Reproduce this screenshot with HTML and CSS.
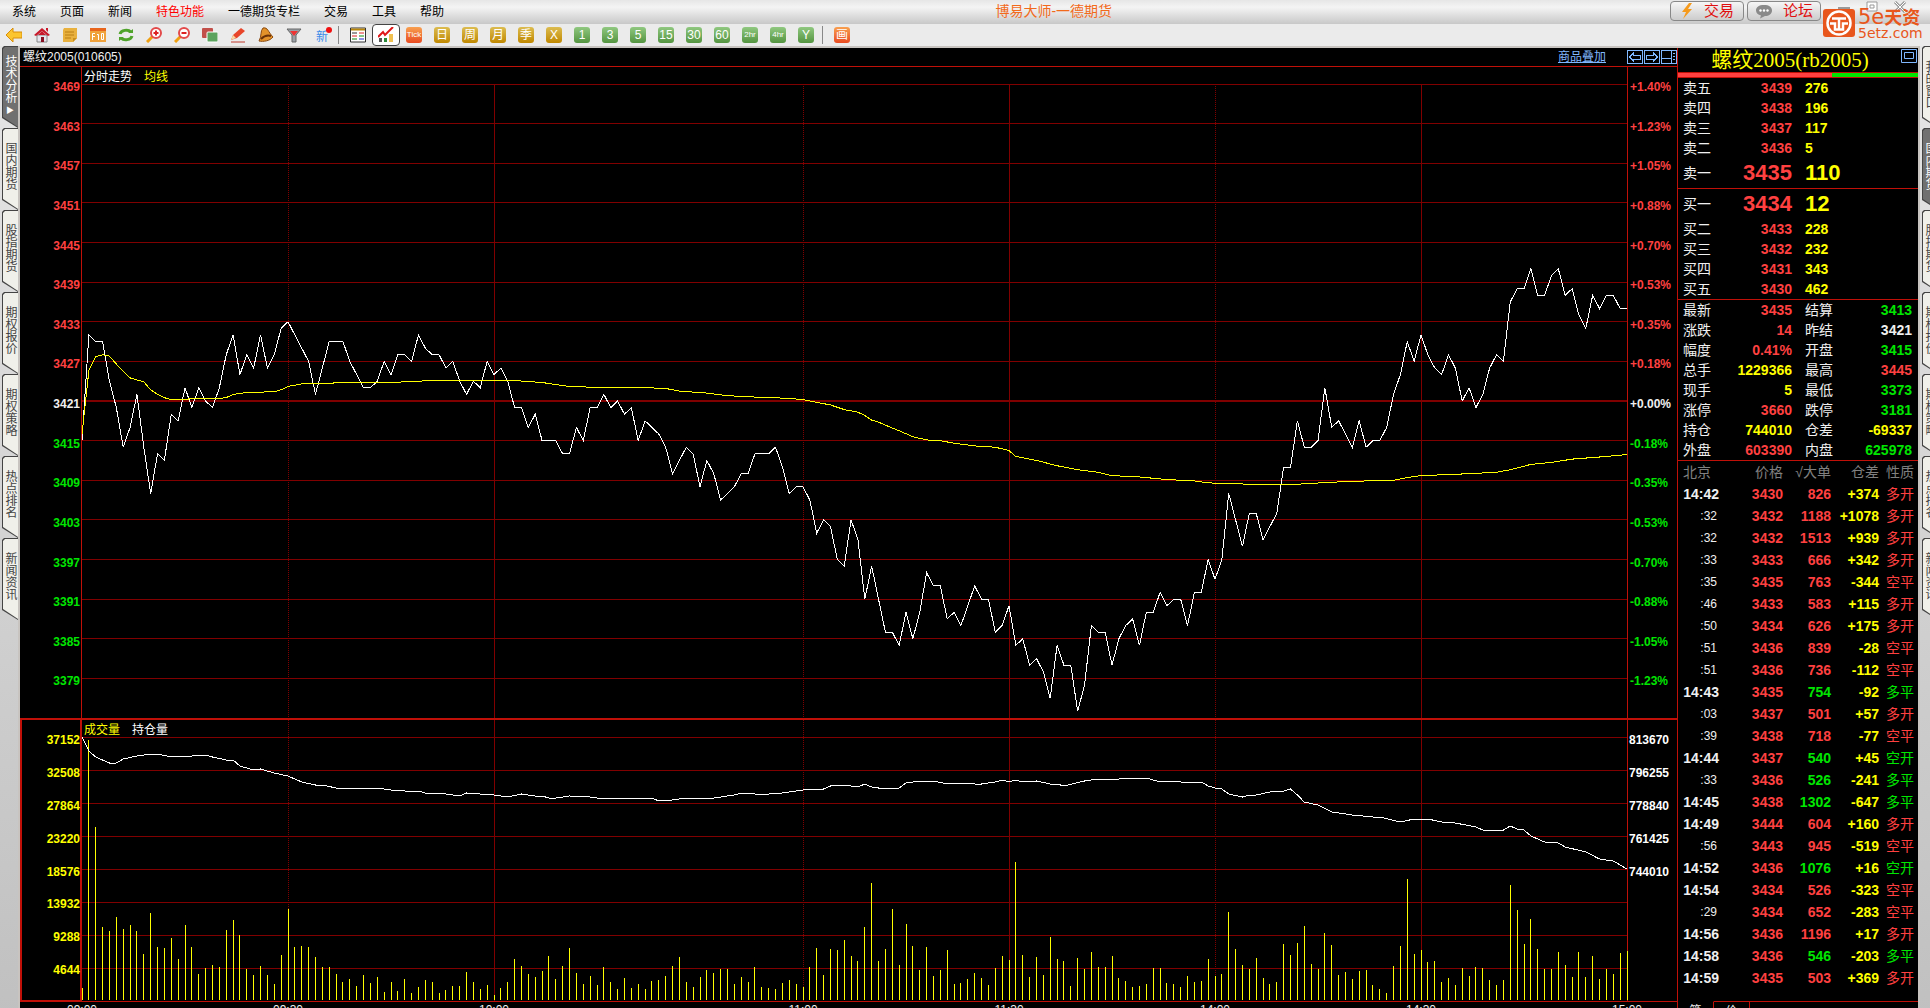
FILE: index.html
```html
<!DOCTYPE html>
<html lang="zh-CN">
<head>
    <meta charset="UTF-8">
    <meta name="viewport" content="width=device-width, initial-scale=1.0">
    <title>博易大师-一德期货</title>
    <link rel="stylesheet" href="styles.css">
</head>
<body>
    <div class="app">
        <header class="menubar">
            <nav class="menu">
                <a href="#">系统</a>
                <a href="#">页面</a>
                <a href="#">新闻</a>
                <a href="#" class="hot">特色功能</a>
                <a href="#">一德期货专栏</a>
                <a href="#">交易</a>
                <a href="#">工具</a>
                <a href="#">帮助</a>
            </nav>
            <h1 class="app-title">博易大师-一德期货</h1>
            <div class="window-actions">
                <button class="pill">
                    <svg width="14" height="16" viewBox="0 0 14 16"><path d="M9 0L2 9h4l-3 7 9-10H8l4-6z" fill="#f59a1c"/></svg>
                    交易
                </button>
                <button class="pill">
                    <svg width="18" height="15" viewBox="0 0 18 15"><path d="M9 1c5 0 8 2 8 5.500s-3 5.500-7 5.500l-5 2.500 1-3C3 11 1 9 1 6.500 1 3 4 1 9 1z" fill="#8a8a8a"/><circle cx="5.500" cy="6.500" r="1.200" fill="#fff"/><circle cx="9" cy="6.500" r="1.200" fill="#fff"/><circle cx="12.500" cy="6.500" r="1.200" fill="#fff"/></svg>
                    论坛
                </button>
                <div class="window-buttons">
                    <button aria-label="最小化"><svg width="16" height="12" viewBox="0 0 16 12"><path d="M2 7h12" stroke="#999" stroke-width="2"/></svg></button>
                    <button aria-label="还原"><svg width="16" height="12" viewBox="0 0 16 12"><path d="M3 1h10v9H3zM6 4h4v3H6z" fill="#fff" stroke="#999"/></svg></button>
                    <button aria-label="关闭"><svg width="16" height="12" viewBox="0 0 16 12"><path d="M3 1l10 10M13 1L3 11" stroke="#999" stroke-width="3"/><path d="M3 1l10 10M13 1L3 11" stroke="#fff"/></svg></button>
                </div>
            </div>
            <div class="brand">
                <svg width="32" height="28" viewBox="0 0 32 28"><rect width="32" height="28" rx="3" fill="#e8561c"/><circle cx="16" cy="14" r="11.500" fill="none" stroke="#fff" stroke-width="2.500"/><path d="M9 9.500h14M7 14.500h5v6h8v-6h5M16 10v10" fill="none" stroke="#fff" stroke-width="2.500"/></svg>
                <div class="brand-text">
                    <strong>5e<b>天资</b></strong>
                    <span>5etz.com</span>
                </div>
            </div>
        </header>

        <div class="toolbar">
            <button aria-label="后退"><svg viewBox="0 0 16 16"><path d="M0 8l7-7v4h9v6H7v4z" fill="#fbc530" stroke="#d98e08"/></svg></button>
            <button aria-label="主页"><svg viewBox="0 0 16 16"><path d="M3 8h10v7H3z" fill="#e6e6ee" stroke="#888"/><path d="M0 8l8-7 8 7-2 1-6-5-6 5zM12 1h2v4l-2-2z" fill="#c8182a"/><path d="M4 8l4-4 4 4z" fill="#c8182a"/><path d="M7 10h3v5H7z" fill="#812"/></svg></button>
            <button aria-label="记事"><svg viewBox="0 0 16 16"><path d="M2 1h13v10l-4 4H1V3z" fill="#e9b13e"/><path d="M3 5h9M3 8h9M3 11h6" stroke="#b97f14"/><path d="M11 15v-4h4z" fill="#c98f1c"/></svg></button>
            <button aria-label="F10"><svg viewBox="0 0 16 16"><path d="M0 2h16v13H0z" fill="#f0a23c"/><path d="M0 1h16v3H0z" fill="#e8651c"/><path d="M2.500 13V6.500H5M2.500 9.500H5M7 7.500h1.500V13M11.500 6.500h2v6h-2z" fill="none" stroke="#fff"/></svg></button>
            <button aria-label="刷新"><svg viewBox="0 0 16 16"><path d="M2 7c1-4 8-5 11-2M14 9c-1 4-8 5-11 2" fill="none" stroke="#4fa32a" stroke-width="3"/><path d="M10 6h5V2zM6 10H1v4z" fill="#4fa32a"/></svg></button>
            <button aria-label="放大"><svg viewBox="0 0 16 16"><path d="M1 15l6-6" stroke="#f0a010" stroke-width="3"/><circle cx="10" cy="6" r="5" fill="#fff" stroke="#e34a4a" stroke-width="2"/><path d="M7.500 6h5M10 3.500v5" stroke="#d22" stroke-width="2"/></svg></button>
            <button aria-label="缩小"><svg viewBox="0 0 16 16"><path d="M1 15l6-6" stroke="#f0a010" stroke-width="3"/><circle cx="10" cy="6" r="5" fill="#fff" stroke="#e34a4a" stroke-width="2"/><path d="M7.500 6h5" stroke="#d22" stroke-width="2"/></svg></button>
            <button aria-label="叠加"><svg viewBox="0 0 16 16"><rect width="11" height="10" y="1" rx="1" fill="#c2504a"/><rect x="5" y="5" width="11" height="10" rx="1" fill="#5ca35e" stroke="#fff"/></svg></button>
            <button aria-label="画线"><svg viewBox="0 0 16 16"><path d="M1 15h14" stroke="#c0392b"/><path d="M1 13l2-5 8-7 4 3-8 7z" fill="#e8452a"/><path d="M1 13l2-5 3 3z" fill="#f7d9a0"/></svg></button>
            <button aria-label="预警"><svg viewBox="0 0 16 16"><path d="M5 1c5-1 5 4 10 9-3 4-10 5-14 4C4 9 2 4 5 1z" fill="#e3922a" stroke="#8a4a10"/><path d="M3 12c3-3 7-4 10-3" fill="none" stroke="#6b3208" stroke-width="2"/></svg></button>
            <button aria-label="筛选"><svg viewBox="0 0 16 16"><path d="M1 2h14l-5 6v7H6V8z" fill="#9aa0a6" stroke="#666"/><path d="M4 4h8L8 9z" fill="#e33"/></svg></button>
            <button aria-label="新消息" class="tool-new">新</button>
            <i class="divider"></i>
            <button aria-label="报价表"><svg viewBox="0 0 16 16"><path d="M.5 1h15v14H.5z" fill="#fff" stroke="#333"/><path d="M1 2.500h14" stroke="#b8860b" stroke-width="2"/><path d="M2 6h5" stroke="#333"/><path d="M9 6h5M2 9h5" stroke="#d22"/><path d="M9 9h5M2 12h5" stroke="#181"/><path d="M9 12h5" stroke="#22c"/></svg></button>
            <button aria-label="分时图" class="active"><svg viewBox="0 0 16 16"><path d="M1 15v-4h3v4z" fill="#555"/><path d="M6 15v-4h3v4z" fill="#2a8a3a"/><path d="M11 15V7h4v8z" fill="#f0c050"/><path d="M0 10l5-5 2 3 8-8" fill="none" stroke="#e01818" stroke-width="2"/></svg></button>
            <button><span class="chip orange">Tick</span></button>
            <button><span class="chip gold">日</span></button>
            <button><span class="chip gold">周</span></button>
            <button><span class="chip gold">月</span></button>
            <button><span class="chip gold">季</span></button>
            <button><span class="chip gold">X</span></button>
            <button><span class="chip green">1</span></button>
            <button><span class="chip green">3</span></button>
            <button><span class="chip green">5</span></button>
            <button><span class="chip green">15</span></button>
            <button><span class="chip green">30</span></button>
            <button><span class="chip green">60</span></button>
            <button><span class="chip green small">2hr</span></button>
            <button><span class="chip green small">4hr</span></button>
            <button><span class="chip green">Y</span></button>
            <i class="divider"></i>
            <button><span class="chip orange draw">画</span></button>
        </div>

        <main class="workspace">
            <nav class="side-tabs">
                <button class="active"><span>技术分析</span><small>▶</small></button>
                <button><span>国内期货</span></button>
                <button><span>股指期货</span></button>
                <button><span>期权报价</span></button>
                <button><span>期权策略</span></button>
                <button><span>热点排名</span></button>
                <button><span>新闻资讯</span></button>
            </nav>

            <section class="chart">
                <div class="chart-head">
                    <span>螺纹2005(010605)</span>
                    <div class="chart-tools">
                        <a href="#">商品叠加</a>
                        <button aria-label="上一个"><svg width="16" height="14" viewBox="0 0 16 14"><path d="M.5.5h15v13H.5zM2.500 7l4-4v2h7v4h-7v2z"/></svg></button>
                        <button aria-label="下一个"><svg width="16" height="14" viewBox="0 0 16 14"><path d="M.5.5h15v13H.5zM13.500 7l-4-4v2h-7v4h7v2z"/></svg></button>
                        <button aria-label="布局"><svg width="16" height="14" viewBox="0 0 16 14"><path d="M.5.5h15v13H.5zM.5 8.500h10M10.500.5v13M12 3.500h2M12 6.500h2M12 9.500h2"/></svg></button>
                    </div>
                </div>

                <div class="axis price-axis" id="price-axis"></div>
                <div class="legend"><span>分时走势</span><span class="yellow">均线</span></div>
                <svg class="plot-price" id="price-plot" viewBox="0 0 225 96" preserveAspectRatio="none"></svg>
                <div class="axis percent-axis" id="percent-axis"></div>

                <svg class="time-grid" id="time-grid" viewBox="0 0 225 100" preserveAspectRatio="none"></svg>

                <div class="axis volume-axis" id="volume-axis"></div>
                <div class="legend volume-legend"><span class="yellow">成交量</span><span>持仓量</span></div>
                <svg class="plot-volume" id="volume-plot" viewBox="0 0 225 264" preserveAspectRatio="none"></svg>
                <div class="axis interest-axis" id="interest-axis"></div>

                <div class="time-axis" id="time-axis"></div>
            </section>

            <aside class="quote">
                <div class="quote-title">
                    <h2>螺纹2005(rb2005)</h2>
                    <button aria-label="最大化"><svg width="16" height="14" viewBox="0 0 16 14"><path d="M.5.5h15v13H.5zM3.500 3.500h9v6h-9z"/></svg></button>
                </div>
                <div class="ratio"><i></i></div>

                <table class="depth">
                    <tr><th>卖五</th><td class="up">3439</td><td>276</td></tr>
                    <tr><th>卖四</th><td class="up">3438</td><td>196</td></tr>
                    <tr><th>卖三</th><td class="up">3437</td><td>117</td></tr>
                    <tr><th>卖二</th><td class="up">3436</td><td>5</td></tr>
                    <tr class="best"><th>卖一</th><td class="up">3435</td><td>110</td></tr>
                </table>
                <table class="depth">
                    <tr class="best"><th>买一</th><td class="up">3434</td><td>12</td></tr>
                    <tr><th>买二</th><td class="up">3433</td><td>228</td></tr>
                    <tr><th>买三</th><td class="up">3432</td><td>232</td></tr>
                    <tr><th>买四</th><td class="up">3431</td><td>343</td></tr>
                    <tr><th>买五</th><td class="up">3430</td><td>462</td></tr>
                </table>
                <table class="stats">
                    <tr><th>最新</th><td class="up">3435</td><th>结算</th><td class="down">3413</td></tr>
                    <tr><th>涨跌</th><td class="up">14</td><th>昨结</th><td class="flat">3421</td></tr>
                    <tr><th>幅度</th><td class="up">0.41%</td><th>开盘</th><td class="down">3415</td></tr>
                    <tr><th>总手</th><td>1229366</td><th>最高</th><td class="up">3445</td></tr>
                    <tr><th>现手</th><td>5</td><th>最低</th><td class="down">3373</td></tr>
                    <tr><th>涨停</th><td class="up">3660</td><th>跌停</th><td class="down">3181</td></tr>
                    <tr><th>持仓</th><td>744010</td><th>仓差</th><td>-69337</td></tr>
                    <tr><th>外盘</th><td class="up">603390</td><th>内盘</th><td class="down">625978</td></tr>
                </table>
                <table class="ticks">
                    <thead>
                        <tr><th>北京</th><th>价格</th><th>√大单</th><th>仓差</th><th>性质</th></tr>
                    </thead>
                    <tbody id="ticks"></tbody>
                </table>
                <div class="quote-tabs">
                    <button class="active">笔</button>
                    <button>价</button>
                </div>
            </aside>

            <nav class="side-tabs right">
                <button><span>我的窗口</span></button>
                <button class="active"><span>国内期货</span></button>
                <button><span>股指期货</span></button>
                <button><span>期权报价</span></button>
                <button><span>期权策略</span></button>
                <button><span>热点排名</span></button>
                <button><span>新闻资讯</span></button>
            </nav>
        </main>
    </div>

    <script src="script.js"></script>
</body>
</html>
```

FILE: styles.css
```css
* {
    box-sizing: border-box;
}

body {
    margin: 0;
    height: 100vh;
    overflow: hidden;
    background: #000;
    color: #f0f0f0;
    font-family: "Liberation Sans", "Noto Sans CJK SC", sans-serif;
    font-size: 12px;
}

button {
    margin: 0;
    padding: 0;
    border: 0;
    background: none;
    color: inherit;
    font: inherit;
    cursor: pointer;
}

h1,
h2 {
    margin: 0;
    font-weight: normal;
}

.app {
    display: flex;
    flex-direction: column;
    /* the time axis runs past the bottom edge of the window */
    height: calc(100vh + 12px);
}

/* menu bar */
.menubar {
    position: relative;
    display: flex;
    align-items: flex-start;
    justify-content: space-between;
    flex: 0 0 24px;
    padding-left: 12px;
    background: linear-gradient(#e6e6e6, #f4f4f4 30%, #c8c8c8);
}

.menu {
    display: flex;
    flex: 17 1 0;
    gap: 24px;
    line-height: 24px;
}

.menu a {
    color: #000;
    text-decoration: none;
}

.menu a.hot {
    color: #f00;
}

.app-title {
    color: #f26a1b;
    font-size: 14px;
    line-height: 22px;
}

.window-actions {
    display: flex;
    flex: 14 1 0;
    justify-content: flex-end;
    gap: 3px;
    padding-top: 1px;
    padding-right: 8px;
}

.pill {
    display: flex;
    align-items: center;
    justify-content: center;
    gap: 10px;
    width: 74px;
    height: 20px;
    border: 1px solid #888;
    border-radius: 4px;
    background: linear-gradient(#f6f6f6, #ccc);
    color: #e01010;
    font-size: 15px;
    line-height: 16px;
}

.window-buttons {
    display: flex;
    align-items: flex-start;
    gap: 12px;
    padding-left: 12px;
    width: 98px;
}

.brand {
    position: absolute;
    top: 9px;
    right: 5px;
    display: flex;
    gap: 3px;
    color: #e8561c;
    z-index: 2;
}

.brand-text {
    display: flex;
    flex-direction: column;
    width: 67px;
}

.brand-text strong {
    font-family: "DejaVu Sans", "Noto Sans CJK SC", sans-serif;
    font-size: 21px;
    font-weight: normal;
    line-height: 16px;
    white-space: nowrap;
}

.brand-text b {
    font-size: 18px;
}

.brand-text span {
    font-family: "DejaVu Sans", sans-serif;
    font-size: 14px;
    line-height: 14px;
}

/* toolbar */
.toolbar {
    display: flex;
    align-items: center;
    flex: 0 0 24px;
    border-bottom: 2px solid #c8c4c0;
    background: #ebebeb;
}

.toolbar button {
    display: flex;
    align-items: center;
    justify-content: center;
    width: 28px;
    height: 22px;
}

.toolbar button.active {
    border: 1px solid #444;
    border-radius: 4px;
    background: #fff;
}

.toolbar svg {
    width: 16px;
    height: 16px;
}

.toolbar .tool-new {
    position: relative;
    color: #3a8ae8;
}

.tool-new::after {
    content: "";
    position: absolute;
    top: 3px;
    right: 4px;
    width: 6px;
    height: 6px;
    border-radius: 50%;
    background: #f01010;
}

.divider {
    width: 8px;
    height: 18px;
    background: linear-gradient(#888, #888) 2px 0 / 1px 100% no-repeat;
}

.chip {
    width: 16px;
    height: 16px;
    border-radius: 3px;
    color: #fff;
    font-size: 12px;
    line-height: 16px;
    text-align: center;
}

.chip.small,
.chip.orange {
    font-size: 8px;
}

.chip.orange.draw {
    font-size: 12px;
}

.chip.gold {
    background: linear-gradient(#dcbc50, #c08800);
}

.chip.green {
    background: linear-gradient(#90c880, #549440);
}

.chip.orange {
    background: linear-gradient(#f8a050, #e84a20);
}

/* workspace */
.workspace {
    display: grid;
    grid-template-columns: 20px 1fr 241px 12px;
    flex: 1;
    min-height: 0;
}

.side-tabs {
    display: flex;
    flex-direction: column;
    padding-left: 2px;
    margin-top: -2px;
    border-right: 2px solid #c8c4c0;
    background: linear-gradient(#e6e6e6, #c0c0c0);
    overflow: hidden;
}

.side-tabs button {
    position: relative;
    display: flex;
    flex-direction: column;
    align-items: center;
    flex: 0 0 82px;
    width: 16px;
    padding-top: 14px;
    background: #444;
    clip-path: polygon(0 2px, 2px 0, 100% 0, 100% 100%, 0 72px);
    color: #444;
    line-height: 16px;
}

.side-tabs button::before {
    content: "";
    position: absolute;
    inset: 1px 0 1px 1px;
    background: #f0f0ea;
    clip-path: polygon(0 2px, 2px 0, 100% 0, 100% 100%, 0 70px);
}

.side-tabs span {
    position: relative;
    writing-mode: vertical-rl;
}

.side-tabs .active {
    padding-top: 9px;
    color: #fff;
}

.side-tabs .active::before {
    background: #707070;
}

.side-tabs small {
    position: relative;
    font-size: 8px;
    line-height: 16px;
}

.side-tabs.right {
    border-left: 2px solid #c8c4c0;
    border-right: 0;
}

.side-tabs.right .active {
    padding-top: 14px;
}

/* chart */
.chart {
    display: grid;
    grid-template-columns: 62px 1fr 50px;
    grid-template-rows: 19px 17px 634fr 19px 264fr 19px;
    min-width: 0;
    min-height: 0;
    background: #000;
}

.chart-head {
    grid-column: 1 / 4;
    display: flex;
    justify-content: space-between;
    padding-left: 3px;
    border-bottom: 1px solid #c01008;
    line-height: 18px;
}

.chart-tools {
    display: flex;
    align-items: center;
    gap: 1px;
}

.chart-tools a {
    margin-right: 20px;
    color: #80b8ff;
}

.chart-tools button,
.quote-title button {
    height: 14px;
    line-height: 0;
}

.chart-tools svg,
.quote-title svg {
    fill: none;
    stroke: #80b8ff;
}

.axis {
    display: grid;
    grid-auto-rows: 1fr;
    font-weight: bold;
    line-height: 6px;
}

.price-axis {
    grid-area: 2 / 1 / 4 / 2;
    padding-top: 17px;
    padding-right: 1px;
    border-right: 1px solid #c01008;
    text-align: right;
}

.percent-axis {
    grid-area: 2 / 3 / 4 / 4;
    padding-top: 17px;
    padding-left: 2px;
    border-left: 1px solid #c01008;
}

.volume-axis {
    grid-area: 4 / 1 / 6 / 2;
    padding-top: 17px;
    border: 2px solid #c01008;
    margin-bottom: -1px;
    color: #ff0;
    text-align: right;
}

.interest-axis {
    grid-area: 4 / 3 / 6 / 4;
    padding-top: 17px;
    padding-left: 1px;
    border-top: 2px solid #c01008;
    border-left: 1px solid #c01008;
    color: #fff;
}

.legend {
    grid-area: 2 / 2;
    display: flex;
    gap: 12px;
    padding-left: 2px;
    color: #fff;
    line-height: 20px;
}

.volume-legend {
    grid-area: 4 / 2;
    border-top: 2px solid #c01008;
}

.plot-price {
    grid-area: 3 / 2;
    z-index: 1;
}

.plot-volume {
    grid-area: 5 / 2;
    z-index: 1;
}

.time-grid {
    grid-area: 3 / 2 / 6 / 3;
}

.chart > svg {
    width: 100%;
    height: 100%;
    min-height: 0;
    overflow: visible;
}

.chart path {
    fill: none;
    stroke-width: 1px;
    vector-effect: non-scaling-stroke;
    shape-rendering: crispEdges;
}

.chart .grid {
    stroke: #800000;
}

.chart .dotted {
    stroke-dasharray: 1 1;
}

.chart .base {
    stroke-width: 2px;
}

.chart .white-line {
    stroke: #fff;
}

.chart .yellow-line {
    stroke: #ff0;
}

.time-axis {
    grid-column: 1 / 4;
    display: flex;
    justify-content: space-between;
    padding: 0 35px 0 47px;
    border-top: 1px solid #c01008;
    line-height: 16px;
}

.time-axis span {
    width: 30px;
    text-align: center;
}

.time-axis .wide {
    margin-left: 103px;
}

.up {
    color: #ff4040;
}

.down {
    color: #00e600;
}

.flat {
    color: #f0f0f0;
}

.yellow {
    color: #ff0;
}

/* quote panel */
.quote {
    display: flex;
    flex-direction: column;
    border-left: 1px solid #c01008;
    background: #000;
    font-size: 14px;
}

.quote-title {
    display: flex;
    align-items: flex-start;
    padding: 1px 1px 0;
    height: 24px;
}

.quote-title h2 {
    flex: 1;
    color: #ff0;
    font-family: "Liberation Serif", "Noto Sans CJK SC", serif;
    font-size: 21px;
    line-height: 22px;
    text-align: center;
}

.ratio {
    height: 6px;
    border-top: 1px solid #c01008;
    border-bottom: 1px solid #c01008;
    background: #00e600;
}

.ratio i {
    display: block;
    width: 64%;
    height: 4px;
    background: #ff4040;
}

.quote table {
    width: 100%;
    border-collapse: separate;
    border-spacing: 0;
    table-layout: fixed;
    border-bottom: 1px solid #c01008;
}

.quote th,
.quote td {
    padding: 0;
    height: 20px;
    line-height: 20px;
    white-space: nowrap;
}

.quote th {
    padding-left: 5px;
    font-weight: normal;
    text-align: left;
}

.quote td {
    font-weight: bold;
    text-align: right;
}

.depth th,
.stats th:first-child {
    width: 50px;
}

.depth td:nth-child(2),
.stats td:nth-child(2) {
    width: 64px;
}

.depth td:last-child {
    padding-left: 13px;
    text-align: left;
}

.quote .best td {
    height: 30px;
    font-size: 22px;
    line-height: 30px;
}

.quote .stats th:nth-child(3) {
    width: 60px;
    padding-left: 13px;
}

.stats td:last-child {
    padding-right: 6px;
}

.depth td:last-child,
.stats td:not([class]) {
    color: #ff0;
}

.quote .ticks {
    border-bottom: 0;
}

.ticks th:nth-child(1) {
    width: 41px;
}

.ticks th:nth-child(2) {
    width: 64px;
}

.ticks th:nth-child(3),
.ticks th:nth-child(4) {
    width: 48px;
}

.quote .ticks th,
.quote .ticks td {
    height: 22px;
    line-height: 22px;
}

.quote .ticks th {
    color: #808080;
}

.quote .ticks th:not(:first-child) {
    padding-left: 0;
    text-align: right;
}

.ticks tr > :last-child {
    padding-right: 4px;
}

.quote .ticks .second {
    padding-right: 2px;
    font-size: 12px;
    font-weight: normal;
}

.quote .ticks .type {
    padding-right: 4px;
    font-weight: normal;
}

.quote-tabs {
    display: flex;
    flex: 0 0 19px;
    margin-top: auto;
    font-size: 12px;
    line-height: 12px;
}

.quote-tabs button {
    width: 36px;
    height: 19px;
    border-top: 1px solid #c01008;
    border-right: 1px solid #c01008;
}

.quote-tabs .active {
    border-top-color: transparent;
}

.quote-tabs::after {
    content: "";
    flex: 1;
    border-top: 1px solid #c01008;
}
```

FILE: script.js
```js
// last price of every minute, 09:00 - 15:00 (225 trading minutes)
const prices = [
    3415, 3431, 3430, 3430, 3424, 3420, 3414, 3417, 3422, 3414, 3407, 3413, 3412, 3419, 3418,
    3423, 3420, 3423, 3421, 3420, 3423, 3428, 3431, 3425, 3428, 3426, 3431, 3426, 3428, 3432,
    3433, 3431, 3429, 3427, 3422, 3426, 3430, 3430, 3430, 3427, 3425, 3423, 3423, 3424, 3427,
    3425, 3428, 3428, 3427, 3431, 3429, 3428, 3428, 3426, 3427, 3424, 3422, 3424, 3423, 3427,
    3425, 3426, 3424, 3420, 3420, 3417, 3419, 3415, 3415, 3415, 3413, 3413, 3417, 3415, 3420,
    3420, 3422, 3420, 3421, 3419, 3420, 3415, 3418, 3417, 3416, 3414, 3410, 3412, 3414, 3413,
    3408, 3412, 3410, 3406, 3407, 3408, 3410, 3410, 3413, 3413, 3413, 3414, 3411, 3407, 3408,
    3408, 3406, 3401, 3403, 3402, 3397, 3396, 3403, 3400, 3391, 3396, 3391, 3386, 3386, 3384,
    3389, 3385, 3389, 3395, 3393, 3393, 3388, 3389, 3387, 3390, 3393, 3391, 3391, 3386, 3387,
    3390, 3384, 3385, 3381, 3382, 3380, 3376, 3384, 3381, 3381, 3374, 3378, 3387, 3386, 3386,
    3381, 3385, 3387, 3388, 3384, 3389, 3389, 3392, 3390, 3391, 3391, 3387, 3392, 3392, 3397,
    3394, 3397, 3407, 3403, 3399, 3404, 3404, 3400, 3402, 3404, 3411, 3411, 3418, 3414, 3414,
    3415, 3423, 3417, 3418, 3416, 3414, 3418, 3414, 3415, 3415, 3417, 3422, 3425, 3430, 3427,
    3431, 3428, 3426, 3425, 3428, 3426, 3421, 3423, 3420, 3422, 3426, 3428, 3427, 3436, 3438,
    3438, 3441, 3437, 3437, 3440, 3441, 3437, 3438, 3434, 3432, 3437, 3435, 3437, 3437, 3435,
    3435
];

// average price, [minute, price]
const average = [
    [0, 3416], [1, 3425.6], [2, 3427.7], [3, 3428], [4, 3427.8], [5, 3426.6], [6, 3425.5], [7, 3424.5],
    [9, 3423.9], [10, 3422.7], [11, 3422], [12, 3421.5], [13, 3421.2], [15, 3421.2], [16, 3421.4],
    [20, 3421.4], [21, 3421.5], [22, 3422], [24, 3422.3], [28, 3422.4], [29, 3422.7], [30, 3423.2],
    [32, 3423.6], [36, 3423.6], [37, 3423.8], [45, 3423.8], [51, 3424.1], [63, 3424.1], [67, 3423.8],
    [71, 3423.2], [74, 3423.1], [80, 3423.1], [85, 3422.9], [87, 3422.5], [91, 3422.2], [94, 3421.8],
    [98, 3421.6], [103, 3421.4], [105, 3421.2], [107, 3420.8], [109, 3420.4], [111, 3419.7],
    [113, 3419.3], [114, 3418.8], [115, 3418.1], [116, 3417.8], [118, 3416.9], [119, 3416.5],
    [121, 3415.6], [123, 3415.1], [125, 3415], [127, 3414.6], [130, 3414.2], [133, 3414], [135, 3413.5],
    [136, 3412.6], [139, 3412], [142, 3411.2], [145, 3410.6], [148, 3410.2], [150, 3409.7], [154, 3409.5],
    [158, 3409.1], [162, 3408.9], [164, 3408.6], [167, 3408.5], [170, 3408.4], [177, 3408.4],
    [182, 3408.7], [187, 3408.9], [191, 3409], [193, 3409.4], [195, 3409.7], [200, 3409.9],
    [206, 3410.2], [208, 3410.6], [211, 3411.4], [214, 3411.7], [217, 3412.2], [222, 3412.6], [225, 3412.9]
];

// volume per minute, one unit is about 141 lots (264 units = 37152)
const volumes = [
    12, 260, 173, 73, 69, 83, 71, 75, 69, 46, 87, 53, 52, 62, 41, 75, 53, 26, 32, 35, 33, 70, 80, 65, 31,
    25, 34, 25, 16, 45, 91, 53, 54, 53, 43, 33, 33, 26, 18, 21, 14, 25, 17, 23, 8, 18, 9, 21, 7, 13,
    20, 18, 7, 10, 14, 14, 28, 18, 11, 15, 5, 12, 18, 41, 34, 26, 23, 29, 44, 21, 34, 52, 27, 16, 24,
    15, 33, 18, 11, 22, 12, 16, 11, 19, 20, 24, 34, 43, 18, 13, 23, 30, 27, 31, 31, 16, 23, 18, 33, 13,
    12, 11, 17, 20, 16, 13, 33, 52, 25, 51, 50, 60, 44, 39, 73, 117, 39, 51, 91, 35, 76, 54, 30, 53, 24,
    30, 50, 16, 17, 21, 27, 22, 15, 32, 44, 40, 138, 45, 23, 43, 25, 63, 41, 39, 14, 42, 31, 48, 33, 33,
    44, 22, 19, 13, 14, 16, 32, 32, 17, 16, 13, 24, 18, 19, 41, 24, 26, 88, 51, 35, 31, 42, 22, 16, 18,
    56, 45, 57, 74, 36, 31, 67, 55, 25, 28, 21, 29, 30, 15, 11, 7, 34, 54, 121, 46, 50, 38, 39, 18, 22,
    15, 32, 24, 33, 32, 20, 15, 20, 115, 90, 56, 81, 51, 31, 31, 48, 35, 23, 48, 23, 44, 21, 31, 26, 47,
    49
];

// open interest, [minute, distance below 813670 in the same units]
const interest = [
    [0, 0], [1, 14], [2, 20], [3, 23], [4, 26], [5, 26], [6, 22], [8, 19], [10, 17], [11, 17], [13, 20],
    [14, 19], [16, 19], [17, 18], [18, 18], [19, 20], [21, 23], [22, 23], [23, 29], [25, 33], [26, 32],
    [28, 36], [30, 39], [32, 45], [34, 48], [35, 48], [37, 51], [41, 51], [42, 52], [43, 51], [45, 53],
    [47, 54], [49, 54], [50, 56], [52, 56], [55, 59], [56, 56], [58, 57], [60, 58], [62, 60], [64, 57],
    [66, 59], [67, 59], [68, 61], [69, 61], [71, 59], [72, 60], [73, 59], [75, 61], [76, 62], [77, 61],
    [79, 62], [80, 61], [83, 61], [84, 64], [86, 63], [88, 61], [90, 62], [92, 61], [95, 58], [96, 56],
    [98, 57], [100, 57], [102, 56], [104, 54], [106, 52], [107, 53], [108, 52], [109, 49], [110, 48],
    [111, 48], [113, 50], [114, 47], [115, 50], [116, 51], [119, 51], [120, 46], [122, 44], [124, 44],
    [126, 47], [127, 46], [128, 47], [129, 46], [130, 47], [131, 47], [133, 45], [134, 43], [135, 45],
    [136, 43], [137, 45], [139, 44], [141, 47], [142, 47], [143, 49], [146, 44], [147, 43], [149, 42],
    [150, 43], [152, 41], [153, 41], [154, 42], [155, 41], [157, 45], [159, 44], [161, 46], [162, 45],
    [163, 45], [164, 49], [165, 51], [166, 52], [167, 57], [169, 60], [170, 58], [171, 58], [173, 55],
    [175, 54], [176, 52], [177, 58], [178, 65], [180, 68], [182, 75], [185, 78], [188, 80], [189, 80],
    [192, 85], [194, 82], [196, 82], [198, 85], [200, 86], [203, 90], [204, 93], [207, 93], [208, 89],
    [209, 92], [210, 93], [211, 99], [213, 105], [215, 106], [216, 110], [219, 115], [221, 122],
    [223, 124], [225, 132]
];

// time, price, size, open interest change, type
const ticks = [
    ['14:42', 3430, 826, '+374', '多开'], [':32', 3432, 1188, '+1078', '多开'],
    [':32', 3432, 1513, '+939', '多开'], [':33', 3433, 666, '+342', '多开'],
    [':35', 3435, 763, '-344', '空平'], [':46', 3433, 583, '+115', '多开'],
    [':50', 3434, 626, '+175', '多开'], [':51', 3436, 839, '-28', '空平'],
    [':51', 3436, 736, '-112', '空平'], ['14:43', 3435, 754, '-92', '多平'],
    [':03', 3437, 501, '+57', '多开'], [':39', 3438, 718, '-77', '空平'],
    ['14:44', 3437, 540, '+45', '空开'], [':33', 3436, 526, '-241', '多平'],
    ['14:45', 3438, 1302, '-647', '多平'], ['14:49', 3444, 604, '+160', '多开'],
    [':56', 3443, 945, '-519', '空平'], ['14:52', 3436, 1076, '+16', '空开'],
    ['14:54', 3434, 526, '-323', '空平'], [':29', 3434, 652, '-283', '空平'],
    ['14:56', 3436, 1196, '+17', '多开'], ['14:58', 3436, 546, '-203', '多平'],
    ['14:59', 3435, 503, '+369', '多开']
];

const TOP = 3469;
const BASE = 3421;

function el(id) {
    return document.getElementById(id);
}

function path(d, cls) {
    return `<path class="${cls}" d="${d}"/>`;
}

function line(points) {
    return 'M' + points.map(p => p.join(' ')).join('L');
}

function drawPrice() {
    let svg = '';
    for (let p = TOP; p >= 3379; p -= 6) {
        svg += path(`M0 ${TOP - p}H225`, p === BASE ? 'grid base' : 'grid');
    }
    svg += path(line(prices.map((p, i) => [i, TOP - p])), 'white-line');
    svg += path(line(average.map(([i, p]) => [i, TOP - p])), 'yellow-line');
    el('price-plot').innerHTML = svg;
}

function drawVolume() {
    let svg = '';
    for (let y = 0; y < 264; y += 33) {
        svg += path(`M0 ${y}H225`, 'grid');
    }
    svg += path(volumes.map((v, i) => `M${i} 263V${263 - v}`).join(''), 'yellow-line');
    svg += path(line(interest), 'white-line');
    el('volume-plot').innerHTML = svg;
}

function drawTimeGrid() {
    const solid = [60, 135, 195];
    const dotted = [30, 105, 165];
    el('time-grid').innerHTML =
        solid.map(i => path(`M${i} 0V100`, 'grid')).join('') +
        dotted.map(i => path(`M${i} 0V100`, 'grid dotted')).join('');
}

function fillAxes() {
    let left = '';
    let right = '';
    for (let p = TOP; p > 3373; p -= 6) {
        const cls = p > BASE ? 'up' : p < BASE ? 'down' : 'flat';
        const pct = (p - BASE) / BASE * 100;
        left += `<span class="${cls}">${p}</span>`;
        right += `<span class="${cls}">${pct >= 0 ? '+' : ''}${pct.toFixed(2)}%</span>`;
    }
    el('price-axis').innerHTML = left;
    el('percent-axis').innerHTML = right;

    let vol = '';
    let oi = '';
    for (let n = 8; n > 0; n--) {
        vol += `<span>${n * 4644}</span>`;
        oi += `<span>${n > 3 ? 744010 + (n - 4) * 17415 : ''}</span>`;
    }
    el('volume-axis').innerHTML = vol;
    el('interest-axis').innerHTML = oi;

    // 10:15-10:30 is a break, so 10:00 to 11:00 is one and a half steps
    const times = ['09:00', '09:30', '10:00', '11:00', '11:30', '14:00', '14:30', '15:00'];
    el('time-axis').innerHTML = times
        .map(t => `<span${t === '11:00' ? ' class="wide"' : ''}>${t}</span>`)
        .join('');
}

function fillTicks() {
    el('ticks').innerHTML = ticks.map(([time, price, size, diff, type]) => {
        // 多开 and 空平 are buys: red, otherwise green
        const cls = type === '多开' || type === '空平' ? 'up' : 'down';
        return `<tr>
            <td class="${time[0] === ':' ? 'second' : 'flat'}">${time}</td>
            <td class="up">${price}</td>
            <td class="${cls}">${size}</td>
            <td class="yellow">${diff}</td>
            <td class="type ${cls}">${type}</td>
        </tr>`;
    }).join('');
}

drawPrice();
drawVolume();
drawTimeGrid();
fillAxes();
fillTicks();
```
